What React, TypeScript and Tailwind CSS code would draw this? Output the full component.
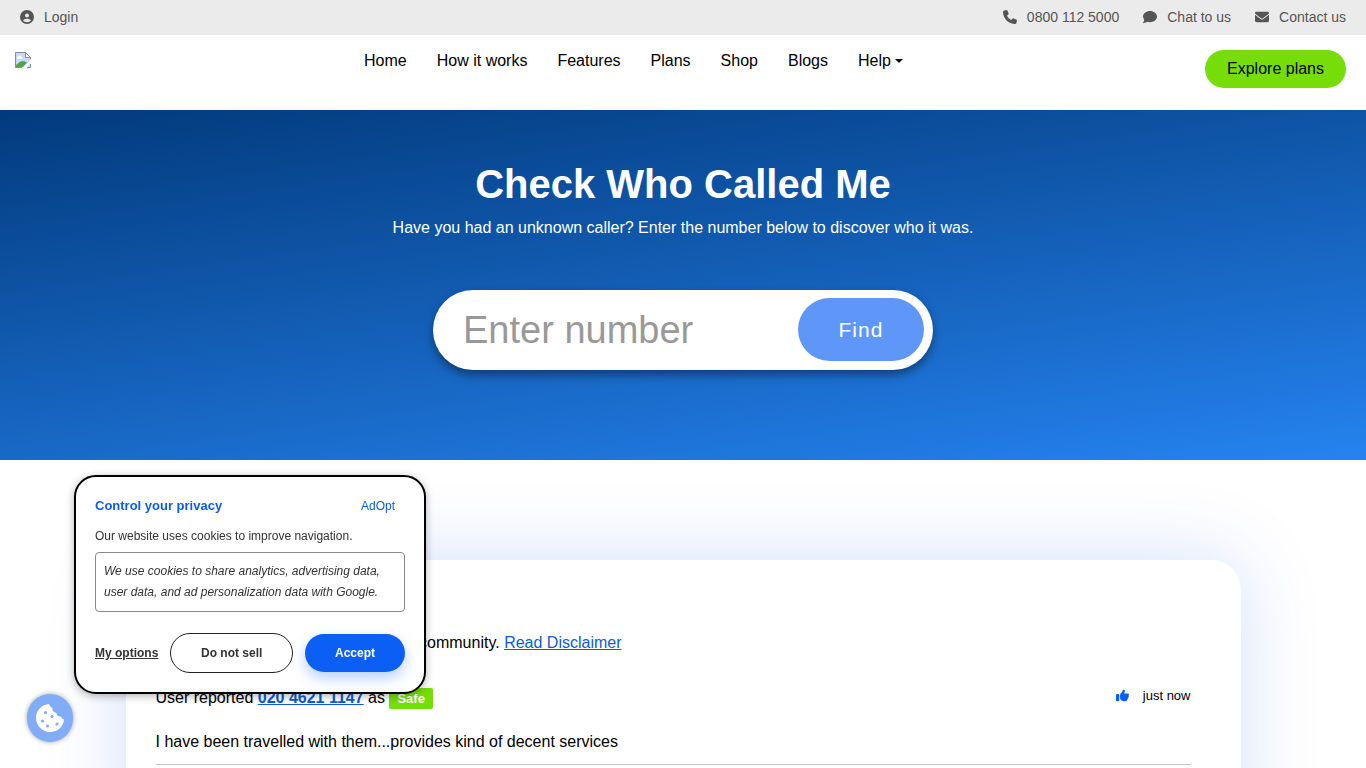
import { FaPhone, FaComment, FaEnvelope, FaThumbsUp, FaCircleUser } from 'react-icons/fa6'

const navItems = ['Home', 'How it works', 'Features', 'Plans', 'Shop', 'Blogs']

const contactLinks = [
  { label: '0800 112 5000', icon: FaPhone },
  { label: 'Chat to us', icon: FaComment },
  { label: 'Contact us', icon: FaEnvelope },
]

function TopBar() {
  return (
    <div className="flex h-[35px] items-center justify-between bg-[#ebebeb] px-5 pb-0.5 text-sm text-[#555]">
      <a href="#" className="flex items-center gap-2.5">
        <FaCircleUser className="h-3.5 w-3.5" />
        Login
      </a>
      <div className="flex items-center gap-6">
        {contactLinks.map(({ label, icon: Icon }) => (
          <a key={label} href="#" className="flex items-center gap-2.5">
            <Icon className="h-3.5 w-3.5" />
            {label}
          </a>
        ))}
      </div>
    </div>
  )
}

function LogoPlaceholder() {
  return (
    <svg className="h-4 w-4" viewBox="0 0 16 16" role="img" aria-label="Logo">
      <path d="M.5.5h10l5 5v10H.5z" fill="#c9dafc" />
      <path d="M3 7c-1.500 0-1.500-2 0-2 0-2 3-2 3 0 2 0 2 2 .5 2z" fill="#fff" />
      <path d="M1 15v-2c2-1 3-4 7-4 2 0 3 1 4 2l-4 4z" fill="#4fa845" />
      <path d="M7 16 16 7.500V11l-5 5z" fill="#fff" />
      <path d="M10.500.5v5h5z" fill="#fff" stroke="#8a8a94" />
      <path d="M7 15.500H.5V.5h10l5 5v2M12 15.500h3.500V12" fill="none" stroke="#8a8a94" />
    </svg>
  )
}

function CookieIcon() {
  return (
    <svg className="h-[30px] w-[30px]" viewBox="0 0 30 30" aria-hidden="true">
      <path
        d="M14 1C6.500 1.500 1 7.500 1 15s6 14 14 14c7.500 0 13.500-5.500 14-12.500-1.500-.5-2.500-1.500-3-3-2.500.5-4.500-1-4.500-3.500-3-.5-4.500-2.500-4-5-1.500-.5-2.500-2-3.500-4z"
        fill="currentColor"
      />
      <g fill="#81adf8">
        <circle cx="10.500" cy="9.500" r="1.600" />
        <circle cx="17" cy="13.500" r="1.600" />
        <circle cx="7.500" cy="18" r="1.600" />
        <circle cx="22" cy="21" r="1.600" />
        <circle cx="12.500" cy="23" r="1.600" />
      </g>
    </svg>
  )
}

function Header() {
  return (
    <header className="grid h-[75px] grid-cols-[1fr_auto_1fr] items-start bg-white pr-5 pl-[15px] text-base text-black">
      <a href="#" className="mt-[17px] justify-self-start">
        <LogoPlaceholder />
      </a>
      <nav className="mt-3.5 flex gap-[30px] pr-[94px]">
        {navItems.map((item) => (
          <a key={item} href="#">{item}</a>
        ))}
        <a href="#" className="flex items-center gap-1">
          Help
          <span className="border-x-4 border-t-4 border-x-transparent border-t-black" />
        </a>
      </nav>
      <a
        href="#"
        className="mt-[15px] flex h-[38px] items-center justify-self-end rounded-full bg-[#77dd08] px-[22px]"
      >
        Explore plans
      </a>
    </header>
  )
}

function Hero() {
  return (
    <section className="flex h-[350px] flex-col items-center bg-[linear-gradient(172deg,#023a7c_0%,#2583f0_100%)] pt-[50px] text-white">
      <h1 className="text-[40px] leading-[48px] font-bold">Check Who Called Me</h1>
      <p className="mt-2 text-base">Have you had an unknown caller? Enter the number below to discover who it was.</p>
      <form
        className="mt-[50px] flex h-20 w-full max-w-[500px] items-start rounded-full bg-white pt-2 pr-[9px] pl-[30px] shadow-[0_5px_10px_rgba(0,0,0,0.4)]"
        onSubmit={(e) => e.preventDefault()}
      >
        <input
          type="text"
          aria-label="Enter number"
          placeholder="Enter number"
          className="h-16 min-w-0 flex-1 text-[38px] text-black outline-none placeholder:text-[#999]"
        />
        <button type="submit" className="h-[63px] w-[126px] rounded-full bg-[#5e97f8] text-[21px] tracking-wider text-white">
          Find
        </button>
      </form>
    </section>
  )
}

function Reports() {
  return (
    <section className="mx-auto mt-[100px] w-full max-w-[1115px] rounded-t-[30px] bg-white px-[30px] pt-[71px] pb-20 text-base text-black shadow-[0_0_80px_rgba(5,80,230,0.18)]">
      <p className="w-[466px] text-right">
        community. <a href="#" className="text-[#0b5cd5] underline">Read Disclaimer</a>
      </p>
      <article className="mt-[31px] mr-5 border-b border-[#c4c4c4] pb-[10px]">
        <div className="flex items-start justify-between">
          <p>
            User reported <a href="#" className="font-bold text-[#0b5cd5] underline">020 4621 1147</a> as{' '}
            <span className="inline-block rounded-xs bg-[#77dd08] px-2 text-[13px] leading-[21px] font-bold text-white">Safe</span>
          </p>
          <div className="flex items-center gap-3.5 text-[13px]">
            <FaThumbsUp className="h-[13px] w-[13px] text-[#0b5ff0]" />
            just now
          </div>
        </div>
        <p className="mt-5">I have been travelled with them...provides kind of decent services</p>
      </article>
    </section>
  )
}

function CookieBanner() {
  return (
    <div
      role="dialog"
      aria-label="Control your privacy"
      className="fixed bottom-[74px] left-[74px] w-[352px] rounded-[22px] border-2 border-black bg-white p-[19px] text-xs text-[#333] shadow-[0_2px_8px_rgba(0,0,0,0.3)]"
    >
      <div className="flex items-center justify-between pr-2.5 leading-5 text-[#0f5be8]">
        <h2 className="text-[13px] font-bold">Control your privacy</h2>
        <a href="#">AdOpt</a>
      </div>
      <p className="mt-2.5 leading-5">Our website uses cookies to improve navigation.</p>
      <p className="mt-1.5 rounded-sm border border-[#888] px-2 py-2 leading-[21px] italic">
        We use cookies to share analytics, advertising data, user data, and ad personalization data with Google.
      </p>
      <div className="mt-[21px] flex items-center justify-between font-bold">
        <button type="button" className="underline">My options</button>
        <button type="button" className="h-10 w-[123px] rounded-full border border-[#222]">Do not sell</button>
        <button type="button" className="h-[38px] w-[100px] rounded-full bg-[#0b5ff5] text-white shadow-[0_6px_14px_rgba(11,95,245,0.3)]">
          Accept
        </button>
      </div>
    </div>
  )
}

export default function App() {
  return (
    <div className="h-screen overflow-hidden bg-white font-['Liberation_Sans',Arial,sans-serif]">
      <TopBar />
      <Header />
      <Hero />
      <Reports />
      <CookieBanner />
      <button
        type="button"
        aria-label="Cookie settings"
        className="fixed bottom-[26px] left-[27px] flex h-12 w-[46px] items-center justify-center rounded-full bg-[#81adf8] text-white shadow-[0_0_5px_rgba(0,0,0,0.35)]"
      >
        <CookieIcon />
      </button>
    </div>
  )
}
